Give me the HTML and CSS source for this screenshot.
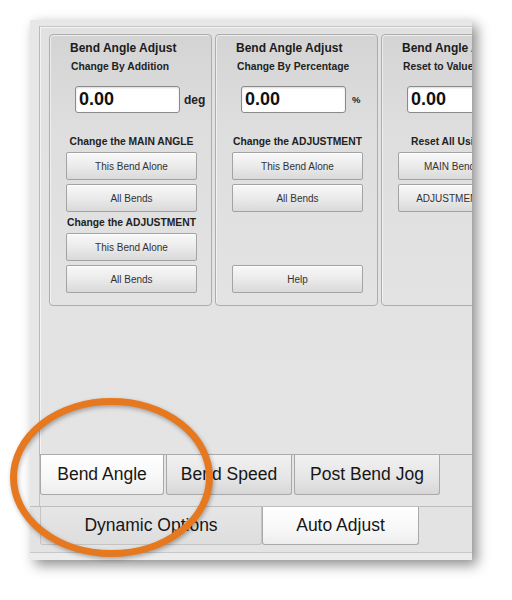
FILE: index.html
```html
<!DOCTYPE html>
<html>
<head>
<meta charset="utf-8">
<link rel="stylesheet" href="styles.css">
</head>
<body>
<div class="window">
  <div class="content">
    <div class="panels">
      <section class="panel">
        <div class="title">Bend Angle Adjust</div>
        <div class="sub">Change By Addition</div>
        <div class="field"><div class="input">0.00</div><span class="unit">deg</span></div>
        <div class="heading">Change the MAIN ANGLE</div>
        <div class="btn">This Bend Alone</div>
        <div class="btn">All Bends</div>
        <div class="heading heading-tight">Change the ADJUSTMENT</div>
        <div class="btn">This Bend Alone</div>
        <div class="btn">All Bends</div>
      </section>
      <section class="panel">
        <div class="title">Bend Angle Adjust</div>
        <div class="sub">Change By Percentage</div>
        <div class="field"><div class="input">0.00</div><span class="unit unit-small">%</span></div>
        <div class="heading">Change the ADJUSTMENT</div>
        <div class="btn">This Bend Alone</div>
        <div class="btn">All Bends</div>
        <div class="btn btn-bottom">Help</div>
      </section>
      <section class="panel">
        <div class="title">Bend Angle Adjust</div>
        <div class="sub">Reset to Value</div>
        <div class="field"><div class="input">0.00</div></div>
        <div class="heading">Reset All Using Value</div>
        <div class="btn">MAIN Bend Angle</div>
        <div class="btn">ADJUSTMENT Value</div>
      </section>
    </div>
  </div>
  <div class="tabrow tabrow-top">
    <div class="tab tab-active w-angle">Bend Angle</div>
    <div class="tab w-speed">Bend Speed</div>
    <div class="tab w-jog">Post Bend Jog</div>
  </div>
  <div class="tabrow tabrow-bottom">
    <div class="tab tab-flat w-dyn">Dynamic Options</div>
    <div class="tab tab-active w-auto">Auto Adjust</div>
  </div>
  <div class="footer"></div>
</div>
<svg class="annotation" viewBox="0 0 230 180" width="230" height="180">
  <ellipse cx="111.5" cy="87.5" rx="98" ry="76" fill="none" stroke="#e6791f" stroke-width="7"/>
</svg>
</body>
</html>
```
FILE: styles.css
```css
* { box-sizing: border-box; }

body {
  margin: 0;
  width: 512px;
  height: 600px;
  background: #ffffff;
  font-family: "Liberation Sans", Arial, sans-serif;
  color: #1e1e1e;
  position: relative;
  overflow: hidden;
}

.window {
  margin: 20px 0 0 30px;
  width: 442px;
  height: 540px;
  padding-top: 6px;
  background: #e7e7e7;
  box-shadow: 5px 5px 12px rgba(0, 0, 0, 0.45);
  overflow: hidden;
  display: flex;
  flex-direction: column;
}

.content {
  flex: 0 0 429px;
  margin-left: 9px;
  width: 460px;
  border-top: 1px solid #c6c6c6;
  border-left: 1px solid #b9b9b9;
  border-bottom: 1px solid #ababab;
  background: linear-gradient(#e1e1e1, #e4e4e4);
  box-shadow: inset 1px 1px 0 #f4f4f4;
  padding: 7px 0 0 9px;
}

.panels {
  display: flex;
  gap: 3px;
}

.panel {
  flex: 0 0 163px;
  height: 272px;
  border: 1px solid #adadad;
  border-radius: 4px;
  background: linear-gradient(#d4d4d4, #dedede 35%, #e3e3e3);
  box-shadow: inset 1px 1px 0 rgba(255, 255, 255, 0.55);
  padding: 6px 0 12px;
  display: flex;
  flex-direction: column;
}

.title {
  margin-left: 20px;
  font-weight: bold;
  font-size: 12px;
  line-height: 14px;
  white-space: nowrap;
  color: #1c1c1c;
}

.sub {
  margin: 5px 0 0 21px;
  font-weight: bold;
  font-size: 10.3px;
  line-height: 13px;
  white-space: nowrap;
  color: #222;
}

.field {
  margin: 13px 0 0 25px;
  display: flex;
  align-items: center;
  height: 27px;
}

.input {
  width: 105px;
  height: 27px;
  flex: 0 0 105px;
  background: #ffffff;
  border: 1px solid #8a8a8a;
  border-radius: 3px;
  box-shadow: inset 0 1px 2px rgba(0, 0, 0, 0.15);
  padding-left: 3px;
  font-weight: bold;
  font-size: 18px;
  line-height: 25px;
  color: #111;
}

.unit {
  margin-left: 4px;
  font-weight: bold;
  font-size: 12px;
  color: #222;
}

.unit-small {
  margin-left: 6px;
  font-size: 9.5px;
}

.heading {
  width: 131px;
  margin: 22px 0 0 16px;
  text-align: center;
  font-weight: bold;
  font-size: 10.3px;
  line-height: 13px;
  white-space: nowrap;
  color: #222;
}

.heading-tight {
  margin-top: 4px;
}

.btn {
  width: 131px;
  height: 28px;
  flex: 0 0 28px;
  margin: 4px 0 0 16px;
  border: 1px solid #a3a3a3;
  border-radius: 2px;
  background: linear-gradient(#f8f8f8, #ebebeb 50%, #d9d9d9);
  box-shadow: inset 0 1px 0 #ffffff;
  display: flex;
  align-items: center;
  justify-content: center;
  font-size: 10px;
  color: #333;
  white-space: nowrap;
}

.btn-bottom {
  margin-top: auto;
}

.tabrow {
  display: flex;
}

.tabrow-top {
  flex: 0 0 51px;
  margin-left: 9px;
  padding-bottom: 11px;
  gap: 2px;
  border-left: 1px solid #c2c2c2;
  background: #e4e4e4;
}

.tabrow-bottom {
  flex: 0 0 39px;
  padding-left: 10px;
  border-top: 1px solid #bdbdbd;
  background: #e3e3e3;
}

.tab {
  height: 100%;
  border: 1px solid #a9a9a9;
  border-top: none;
  border-radius: 0 0 3px 3px;
  background: linear-gradient(#f1f1f1, #e5e5e5 60%, #d7d7d7);
  display: flex;
  align-items: center;
  justify-content: center;
  font-size: 17.5px;
  color: #161616;
  white-space: nowrap;
}

.tab-active {
  background: linear-gradient(#ffffff, #f7f7f7 60%, #ededed);
}

.tab-flat {
  border-color: #c4c4c4;
  background: linear-gradient(#e6e6e6, #dedede);
}

.w-angle { flex: 0 0 124px; }
.w-speed { flex: 0 0 126px; }
.w-jog { flex: 0 0 146px; }
.w-dyn { flex: 0 0 222px; }
.w-auto { flex: 0 0 157px; }

.footer {
  flex: 0 0 15px;
  border-top: 7px solid #e3e3e3;
  background: #ececec;
  box-shadow: inset 0 1px 0 #c9c9c9;
}

.annotation {
  position: absolute;
  left: 0;
  top: 390px;
  filter: drop-shadow(1px 2px 2px rgba(0, 0, 0, 0.3));
}
```
